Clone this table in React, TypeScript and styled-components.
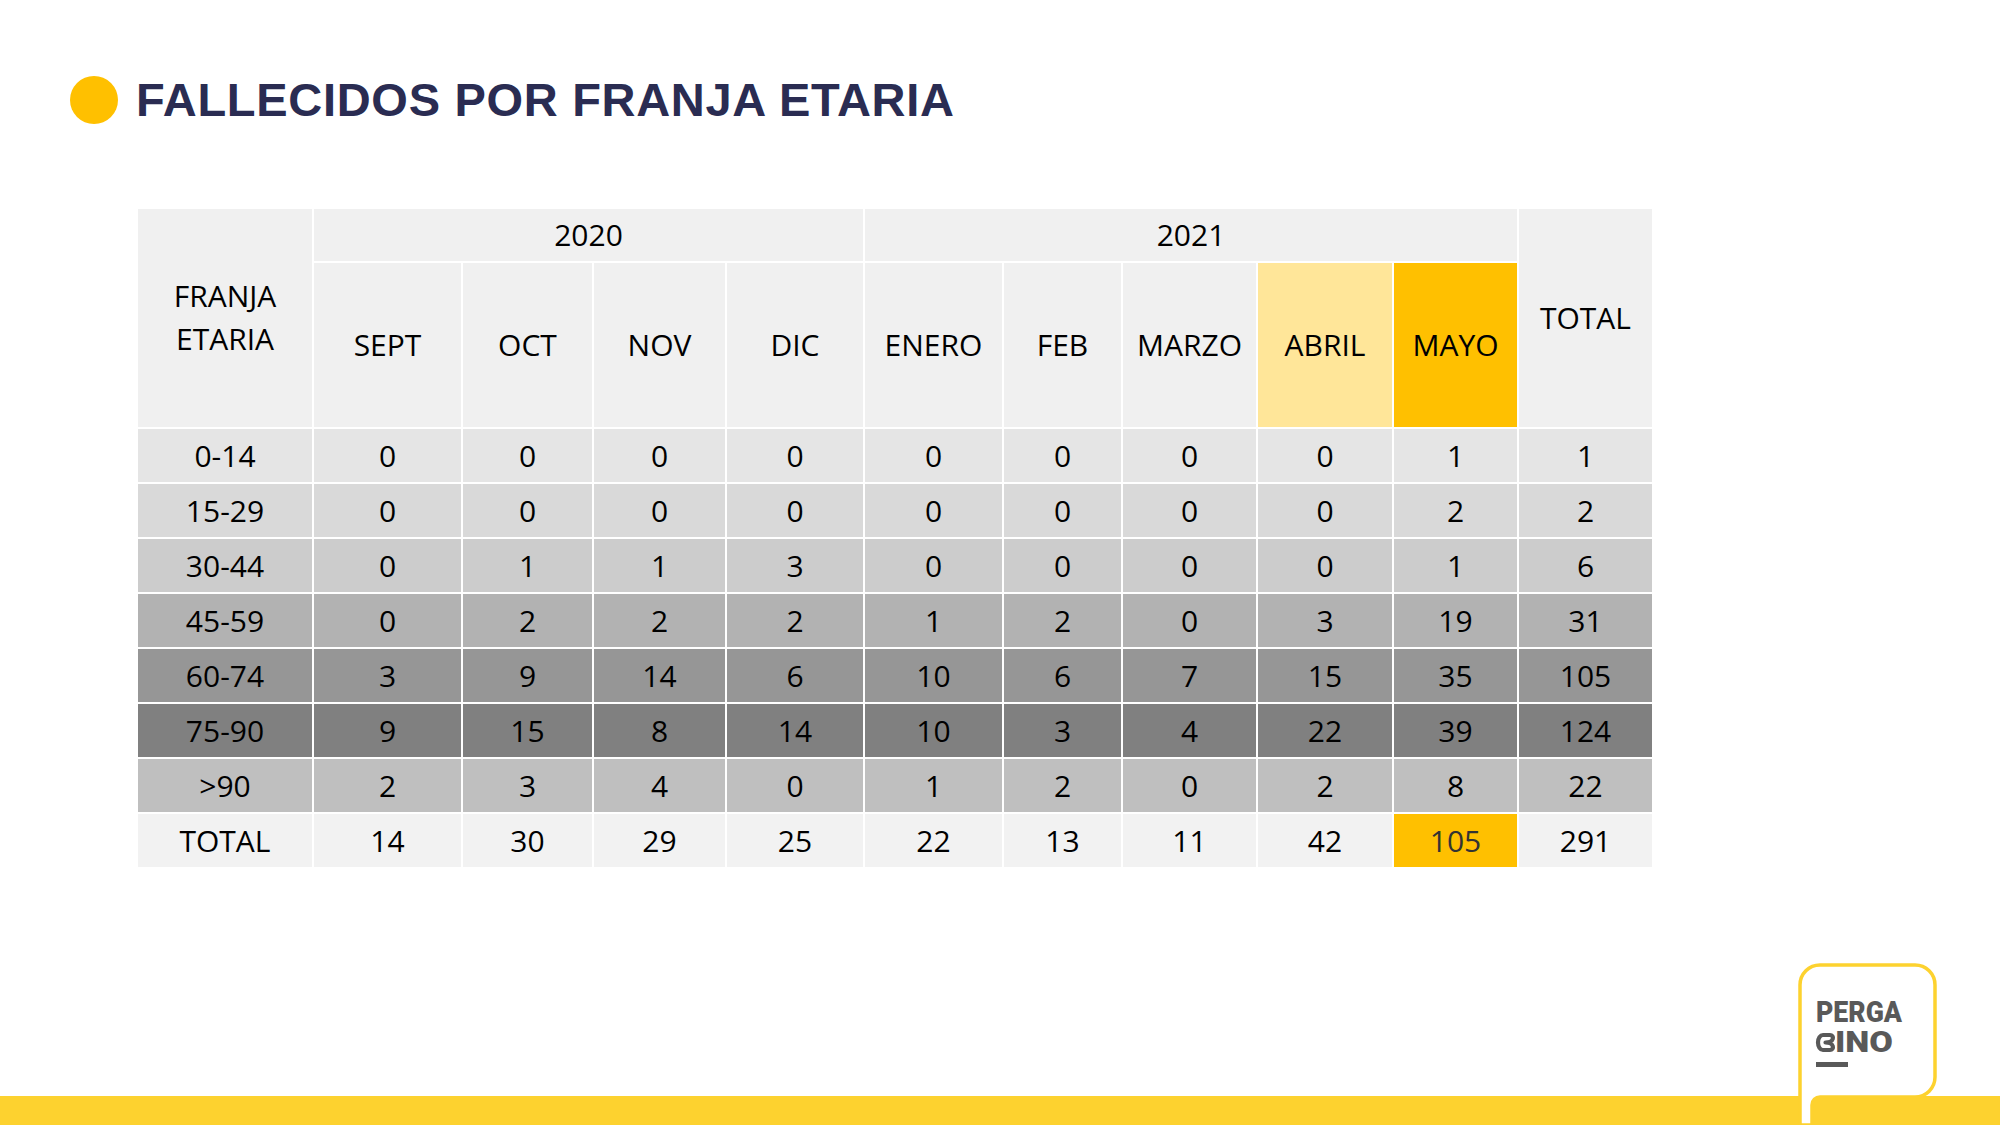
import React from 'react';
import styled, { createGlobalStyle } from 'styled-components';

const GlobalStyle = createGlobalStyle`
    html, body {
        margin: 0;
        padding: 0;
        background: #ffffff;
    }
`;

const Page = styled.div`
    position: relative;
    width: 2000px;
    height: 1125px;
    display: flex;
    flex-direction: column;
    overflow: hidden;
    background: #ffffff;
`;

const TitleRow = styled.div`
    display: flex;
    align-items: center;
    gap: 18px;
    height: 48px;
    padding: 76px 0 0 70px;
`;

const Dot = styled.div`
    width: 48px;
    height: 48px;
    border-radius: 50%;
    background: #ffc000;
    flex-shrink: 0;
`;

const Title = styled.h1`
    margin: 0;
    font-family: "Liberation Sans", Arial, sans-serif;
    font-weight: 700;
    font-size: 47px;
    line-height: 48px;
    letter-spacing: 0.7px;
    color: #2a2c52;
`;

const TableWrap = styled.div`
    margin: 83px 0 0 136px;
`;

const Table = styled.table`
    border-collapse: collapse;
    table-layout: fixed;
    width: 1516px;
    font-family: "Open Sans", "Liberation Sans", sans-serif;
    font-size: 30px;
    color: #000000;
`;

const Row = styled.tr<{ $h: number; $bg: string }>`
    height: ${({ $h }) => $h}px;
    background: ${({ $bg }) => $bg};
`;

const Cell = styled.td<{ $bg?: string; $ink?: string; $lh?: number }>`
    border: 2px solid #ffffff;
    padding: 0;
    text-align: center;
    vertical-align: middle;
    font-weight: 400;
    line-height: ${({ $lh }) => $lh ?? 1};
    background: ${({ $bg }) => $bg ?? 'transparent'};
    color: ${({ $ink }) => $ink ?? '#000000'};
`;

const Footer = styled.div`
    margin-top: auto;
    height: 29px;
    background: #fdd22f;
`;

const Logo = styled.svg`
    position: absolute;
    left: 1790px;
    top: 955px;
    width: 150px;
    height: 170px;
`;

const widths = [176, 149, 131, 133, 138, 139, 119, 135, 136, 125, 135];

const rows: { label: string; bg: string; values: number[] }[] = [
    { label: '0-14', bg: '#e5e5e5', values: [0, 0, 0, 0, 0, 0, 0, 0, 1, 1] },
    { label: '15-29', bg: '#d9d9d9', values: [0, 0, 0, 0, 0, 0, 0, 0, 2, 2] },
    { label: '30-44', bg: '#cccccc', values: [0, 1, 1, 3, 0, 0, 0, 0, 1, 6] },
    { label: '45-59', bg: '#b2b2b2', values: [0, 2, 2, 2, 1, 2, 0, 3, 19, 31] },
    { label: '60-74', bg: '#969696', values: [3, 9, 14, 6, 10, 6, 7, 15, 35, 105] },
    { label: '75-90', bg: '#808080', values: [9, 15, 8, 14, 10, 3, 4, 22, 39, 124] },
    { label: '>90', bg: '#bfbfbf', values: [2, 3, 4, 0, 1, 2, 0, 2, 8, 22] },
];

const totals = [14, 30, 29, 25, 22, 13, 11, 42, 105, 291];

const months: { name: string; bg?: string }[] = [
    { name: 'SEPT' },
    { name: 'OCT' },
    { name: 'NOV' },
    { name: 'DIC' },
    { name: 'ENERO' },
    { name: 'FEB' },
    { name: 'MARZO' },
    { name: 'ABRIL', bg: '#ffe699' },
    { name: 'MAYO', bg: '#ffc000' },
];

const PergaminoLogo: React.FC = () => (
    <Logo viewBox="0 0 150 170">
        <path
            d="M10,170 V30 A20,20 0 0 1 30,10 H125 A20,20 0 0 1 145,30 V122 A20,20 0 0 1 125,142 H30 A8,8 0 0 0 22,150 V170 Z"
            fill="#ffffff"
            stroke="#fdd22f"
            strokeWidth="3.5"
        />
        <text
            x="26"
            y="67"
            fontFamily="Roboto, 'Liberation Sans', sans-serif"
            fontWeight="900"
            fontSize="30"
            fill="#595959"
            textLength="86"
            lengthAdjust="spacingAndGlyphs"
        >
            PERGA
        </text>
        {/* sideways heart */}
        <path
            d="M40,80 H33 A5,7.5 0 0 0 33,95 H40 M40,80 C44.5,80 44.5,87.5 35.5,87.5 C44.5,87.5 44.5,95 40,95"
            fill="none"
            stroke="#595959"
            strokeWidth="4.2"
            strokeLinejoin="round"
        />
        <text
            x="45"
            y="97"
            fontFamily="Roboto, 'Liberation Sans', sans-serif"
            fontWeight="900"
            fontSize="30"
            fill="#595959"
            textLength="58"
            lengthAdjust="spacingAndGlyphs"
        >
            INO
        </text>
        <rect x="26" y="107" width="32" height="5" fill="#595959" />
    </Logo>
);

const App: React.FC = () => {
    return (
        <Page>
            <GlobalStyle />
            <TitleRow>
                <Dot />
                <Title>FALLECIDOS POR FRANJA ETARIA</Title>
            </TitleRow>

            <TableWrap>
                <Table>
                    <colgroup>
                        {widths.map((w, i) => (
                            <col key={i} style={{ width: w }} />
                        ))}
                    </colgroup>
                    <tbody>
                        <Row $h={54} $bg="#f0f0f0">
                            <Cell rowSpan={2} $lh={1.42}>
                                FRANJA
                                <br />
                                ETARIA
                            </Cell>
                            <Cell colSpan={4}>2020</Cell>
                            <Cell colSpan={5}>2021</Cell>
                            <Cell rowSpan={2}>TOTAL</Cell>
                        </Row>
                        <Row $h={166} $bg="#f0f0f0">
                            {months.map((m) => (
                                <Cell key={m.name} $bg={m.bg}>
                                    {m.name}
                                </Cell>
                            ))}
                        </Row>
                        {rows.map((r) => (
                            <Row key={r.label} $h={55} $bg={r.bg}>
                                <Cell>{r.label}</Cell>
                                {r.values.map((v, i) => (
                                    <Cell key={i}>{v}</Cell>
                                ))}
                            </Row>
                        ))}
                        <Row $h={55} $bg="#f2f2f2">
                            <Cell>TOTAL</Cell>
                            {totals.map((v, i) => (
                                <Cell
                                    key={i}
                                    $bg={i === 8 ? '#ffc000' : undefined}
                                    $ink={i === 8 ? '#333333' : undefined}
                                >
                                    {v}
                                </Cell>
                            ))}
                        </Row>
                    </tbody>
                </Table>
            </TableWrap>

            <Footer />
            <PergaminoLogo />
        </Page>
    );
};

export default App;
